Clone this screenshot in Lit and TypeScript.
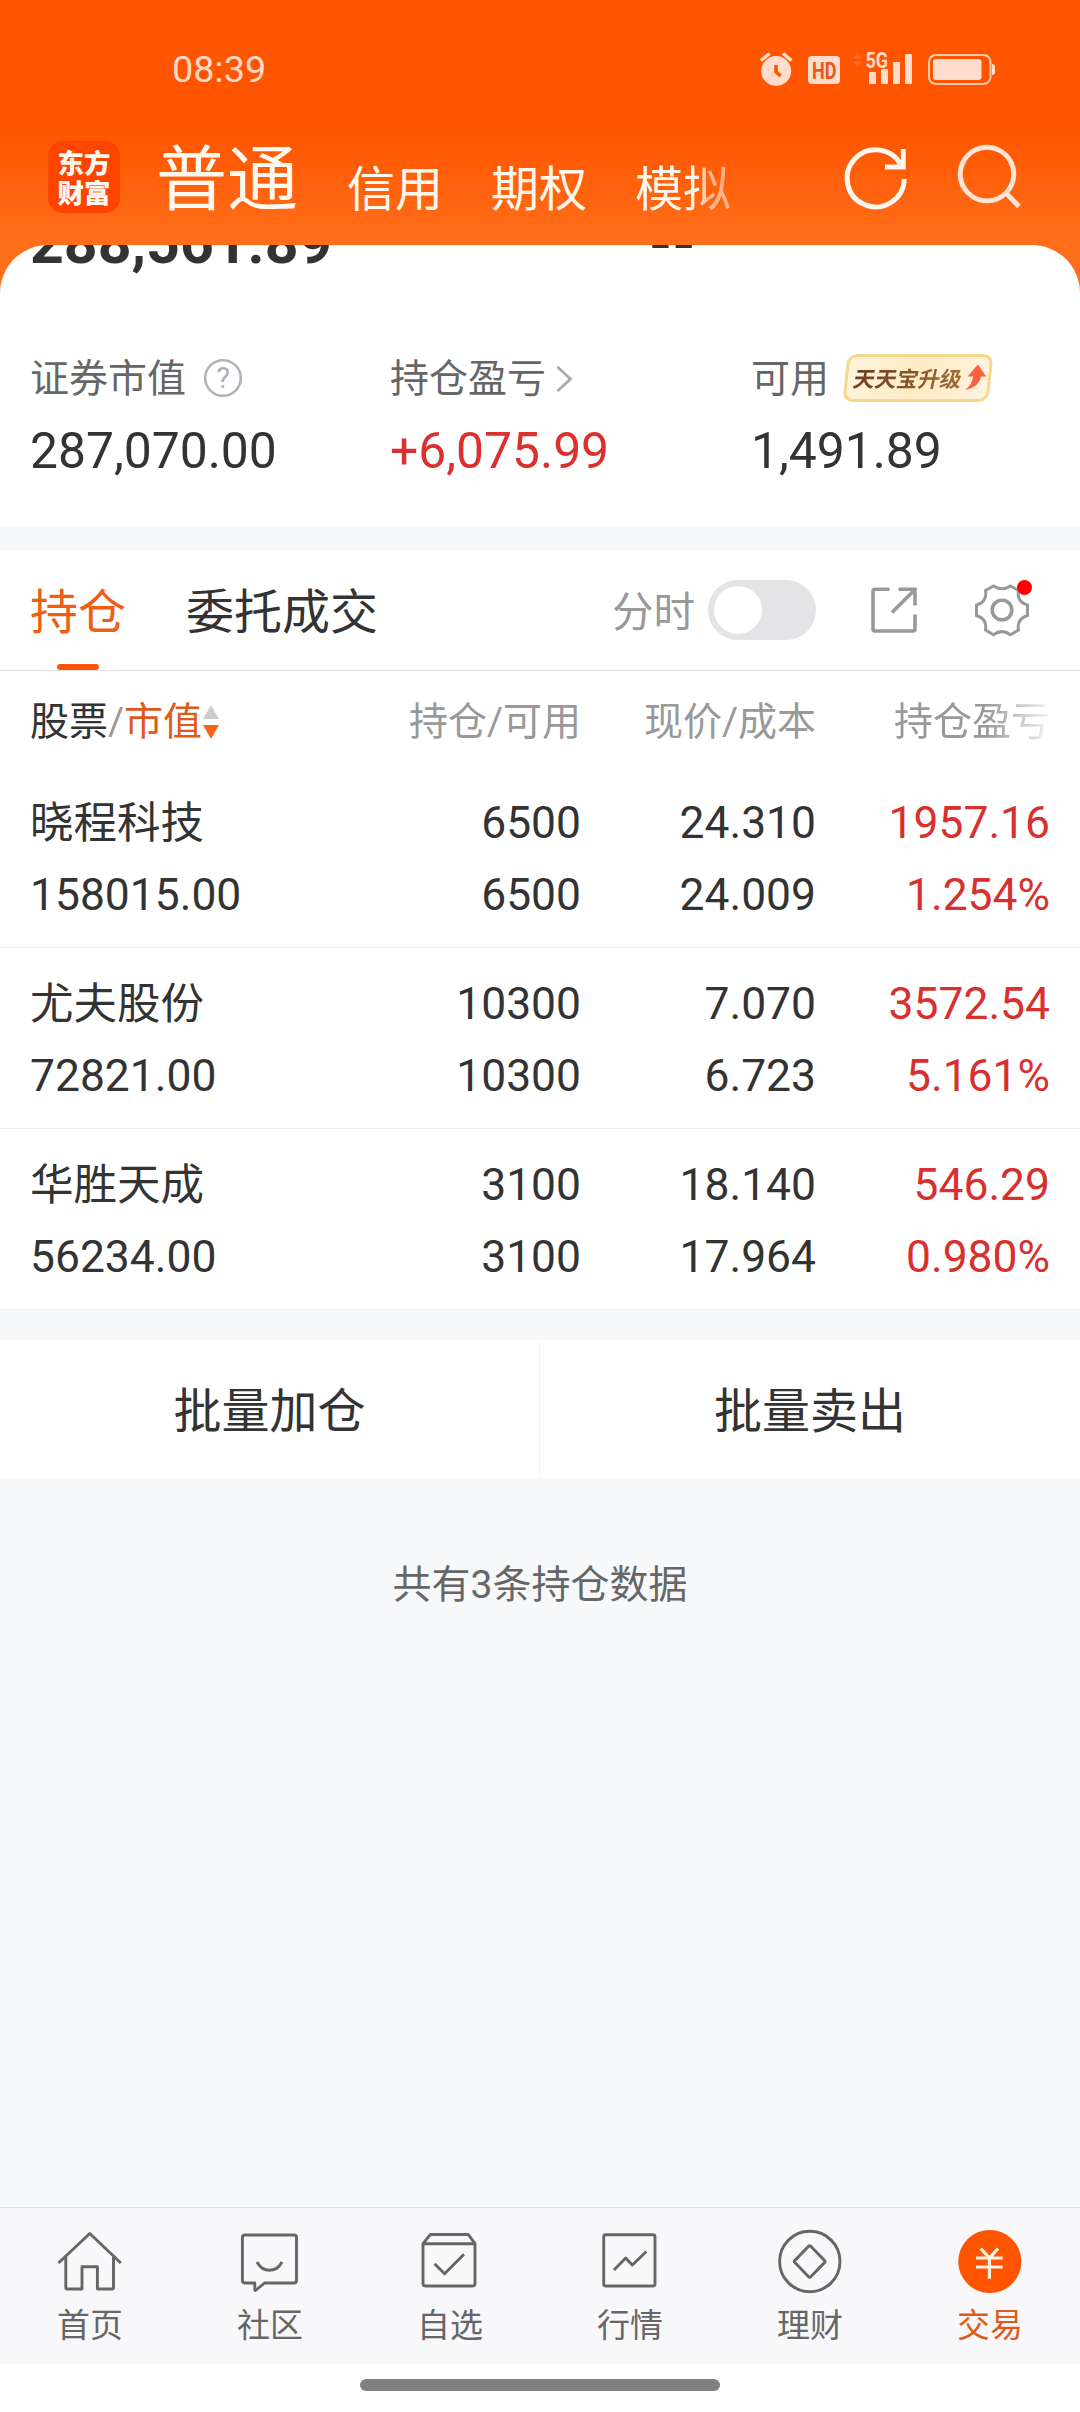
import { LitElement, html, css, svg } from "lit";
import { customElement, property } from "lit/decorators.js";
import { classMap } from "lit/directives/class-map.js";

interface Holding {
  name: string;
  value: string;
  held: string;
  usable: string;
  price: string;
  cost: string;
  profit: string;
  rate: string;
}

const HOLDINGS: Holding[] = [
  { name: "晓程科技", value: "158015.00", held: "6500", usable: "6500", price: "24.310", cost: "24.009", profit: "1957.16", rate: "1.254%" },
  { name: "尤夫股份", value: "72821.00", held: "10300", usable: "10300", price: "7.070", cost: "6.723", profit: "3572.54", rate: "5.161%" },
  { name: "华胜天成", value: "56234.00", held: "3100", usable: "3100", price: "18.140", cost: "17.964", profit: "546.29", rate: "0.980%" },
];

const NAV_ICONS: Record<string, unknown> = {
  home: svg`<path d="M0.500 34 L31.800 4.500 L62.800 34 M7.800 28 V58.500 Q7.800 60 9.300 60 H24 V37.700 H39.400 V60 H54 Q55.500 60 55.500 58.500 V28"/>`,
  community: svg`<path d="M7 6 H56 Q58.500 6 58.500 8.500 V51.500 Q58.500 54 56 54 H26.500 L17.500 61.500 L16.800 61 V54 H7 Q4.400 54 4.400 51.500 V8.500 Q4.400 6 7 6 Z M19 33 Q23.500 41.300 31.500 41.300 Q39.500 41.300 44 33"/>`,
  favorites: svg`<path d="M5 14.700 L12.400 5.500 H50.300 L57 14.700 V54.500 Q57 57 54.500 57 H7.500 Q5 57 5 54.500 Z H57 M16.600 34.700 L26.600 44.700 L46 25.300"/>`,
  market: svg`<rect x="5.700" y="5.700" width="51.300" height="51.300" rx="2"/><path d="M16 41 L27.700 29 L34.300 36 L48.400 22.500"/>`,
  wealth: svg`<circle cx="31.800" cy="32.500" r="30.200"/><path d="M30.600 17.200 Q31.700 16 32.800 17.200 L46.500 31.400 Q47.600 32.500 46.500 33.600 L32.800 47.800 Q31.700 49 30.600 47.800 L16.900 33.600 Q15.800 32.500 16.900 31.400 Z"/>`,
  trade: svg`<circle class="disc" cx="31.800" cy="32.500" r="31.600"/><path class="yen" d="M22.800 19.500 L31.400 29 L40 19.500 M18 29 H44.600 M18 38 H44.600 M31.400 29 V49.700"/>`,
};

@customElement("nav-item")
export class NavItem extends LitElement {
  @property() icon = "";
  @property() label = "";
  @property({ type: Boolean }) active = false;

  static styles = css`
    :host { display: block; flex: 1; }
    .item {
      display: flex;
      flex-direction: column;
      align-items: center;
      padding-top: 21px;
      color: #666;
      font-size: 33px;
      line-height: 40px;
    }
    .active { color: #e0591a; }
    .icon { width: 64px; height: 64px; margin-bottom: 13px; overflow: visible; fill: none; stroke: #666; stroke-width: 2.9; stroke-linejoin: round; }
    .disc { fill: #ff5500; stroke: none; }
    .yen { stroke: #fff1e6; stroke-width: 3.2; stroke-linejoin: miter; }
  `;

  render() {
    return html`<div class=${classMap({ item: true, active: this.active })}>
      <svg class="icon" viewBox="0 0 64 64">${NAV_ICONS[this.icon]}</svg>
      <span>${this.label}</span>
    </div>`;
  }
}

@customElement("holding-row")
export class HoldingRow extends LitElement {
  @property({ attribute: false }) data!: Holding;

  static styles = css`
    :host { display: block; }
    .row {
      display: grid;
      grid-template-columns: 351px 200px 235px 234px;
      grid-template-rows: 72px 72px;
      box-sizing: border-box;
      height: 181px;
      padding: 20px 30px 0 30px;
      border-bottom: 1px solid #ececec;
      font-size: 44.4px;
      line-height: 72px;
      color: #333;
      text-align: right;
      white-space: nowrap;
    }
    .left { text-align: left; }
    .name { font-size: 43.5px; line-height: 73px; }
    .up { color: #d8302f; }
  `;

  render() {
    const d = this.data;
    return html`<div class="row">
      <span class="left name">${d.name}</span><span>${d.held}</span><span>${d.price}</span><span class="up">${d.profit}</span>
      <span class="left">${d.value}</span><span>${d.usable}</span><span>${d.cost}</span><span class="up">${d.rate}</span>
    </div>`;
  }
}

@customElement("app-root")
export class AppRoot extends LitElement {
  static styles = css`
    :host {
      display: block;
      font-family: Roboto, "Noto Sans CJK SC", sans-serif;
      color: #333;
    }
    .screen {
      display: flex;
      flex-direction: column;
      width: 1080px;
      height: 2412px;
      overflow: hidden;
      background: linear-gradient(#ff5500 0, #ff5500 128px, #ff6e1a 240px, #ff6e1a 300px, #f7f8fa 300px);
    }
    svg { display: block; flex: none; }

    .status {
      display: flex;
      justify-content: space-between;
      height: 110px;
      padding: 0 84px 0 172px;
      box-sizing: border-box;
    }
    .clock { padding-top: 46px; font-size: 37.8px; line-height: 46px; color: #ffd9c4; }
    .tray { width: 240px; height: 40px; margin-top: 50px; fill: #ffdccb; }
    .tray-text { font-family: Roboto, sans-serif; font-weight: 700; }

    .top {
      display: flex;
      align-items: flex-start;
      height: 135px;
      padding-left: 48px;
      box-sizing: border-box;
      color: #fff8ef;
      white-space: nowrap;
    }
    .logo {
      display: flex;
      flex-direction: column;
      align-items: center;
      justify-content: center;
      width: 72px;
      height: 72px;
      margin-top: 31px;
      border-radius: 15px;
      background: #ff4400;
      font-family: "Noto Sans CJK SC", sans-serif;
      font-weight: 900;
      font-size: 26.5px;
      line-height: 30px;
    }
    .main-tab { width: 142px; margin: 25px 49px 0 36px; font-size: 71px; line-height: 90px; }
    .tabs { display: flex; gap: 48px; width: 444px; margin-top: 50px; font-size: 48px; line-height: 60px; }
    .fading {
      -webkit-mask-image: linear-gradient(90deg, #000 62px, rgba(0, 0, 0, 0.6) 72px, rgba(0, 0, 0, 0.5) 96px);
      mask-image: linear-gradient(90deg, #000 62px, rgba(0, 0, 0, 0.6) 72px, rgba(0, 0, 0, 0.5) 96px);
    }
    .top-icons { width: 200px; height: 80px; margin-left: 41px; margin-top: 27px; fill: none; stroke-width: 4.9; }

    .summary {
      height: 281px;
      border-radius: 48px 48px 0 0;
      overflow: hidden;
      background: #fff;
      flex: none;
    }
    .totals {
      display: grid;
      grid-template-columns: 619px 1fr;
      align-items: start;
      height: 38px;
      padding-left: 30px;
      overflow: hidden;
      font-size: 59px;
      font-weight: 700;
      line-height: 76px;
    }
    .total { margin-top: -40px; }
    .metrics { display: grid; grid-template-columns: 360px 361px 1fr; padding: 71px 0 0 30px; }
    .label { display: flex; align-items: center; height: 50px; font-size: 39px; line-height: 50px; color: #666; }
    .amount { margin-top: 17px; font-size: 49.8px; line-height: 60px; }
    .red { color: #dc302e; }
    .help { width: 40px; height: 40px; margin-left: 17px; margin-top: -2px; }
    .help-mark { font: 400 29px Roboto, sans-serif; fill: #b0b0b0; }
    .chevron { width: 20px; height: 30px; margin-left: 8px; }
    .promo {
      display: flex;
      align-items: center;
      box-sizing: border-box;
      width: 146px;
      height: 48px;
      margin-left: 16px;
      margin-top: -2px;
      padding-left: 6px;
      border: 3px solid #f5d88c;
      border-radius: 10px;
      background: linear-gradient(100deg, #fff3dc, #ffecc4 50%, #fff3df);
      transform: skewX(-6deg);
    }
    .promo-text {
      font-family: "Noto Sans CJK SC", sans-serif;
      font-size: 21.6px;
      font-weight: 700;
      line-height: 30px;
      transform: skewX(-6deg);
      color: transparent;
      background: linear-gradient(90deg, #6a4022, #a06a35);
      -webkit-background-clip: text;
      background-clip: text;
      white-space: nowrap;
    }
    .promo-arrow { width: 22px; height: 28px; margin-left: 3px; margin-top: -2px; }

    .strip { height: 24px; flex: none; background: #f7f8fa; }
    .toolbar {
      display: flex;
      align-items: flex-start;
      height: 121px;
      flex: none;
      box-sizing: border-box;
      padding-left: 30px;
      border-bottom: 1px solid #dedede;
      background: #fff;
      font-size: 48px;
      line-height: 60px;
    }
    .tab { display: flex; flex-direction: column; align-items: center; margin-top: 33px; }
    .current { color: #ee5f14; }
    .second { margin-left: 60px; }
    .mark { width: 42px; height: 6px; margin-top: 21px; border-radius: 3px; background: #fa5508; }
    .minute { margin: 33px 0 0 234px; font-size: 41.5px; color: #999; }
    .toggle {
      width: 108px;
      height: 60px;
      box-sizing: border-box;
      margin: 30px 0 0 13px;
      padding: 6px;
      border-radius: 30px;
      background: #e4e4e6;
    }
    .knob { width: 48px; height: 48px; border-radius: 50%; background: #fff; }
    .tool-icons { width: 170px; height: 70px; margin: 25px 0 0 49px; fill: none; stroke: #999; stroke-width: 3.6; }

    .list { background: #fff; flex: none; }
    .head {
      display: grid;
      grid-template-columns: 351px 200px 235px 234px;
      height: 96px;
      padding: 26px 30px 0 30px;
      box-sizing: border-box;
      font-size: 39px;
      line-height: 50px;
      color: #999;
      text-align: right;
      white-space: nowrap;
    }
    .sort { display: flex; align-items: center; height: 50px; text-align: left; }
    .dark { color: #333; }
    .orange { color: #e0591a; }
    .arrows { width: 16px; height: 36px; margin-left: 1px; }
    .fade {
      -webkit-mask-image: linear-gradient(90deg, #000 170px, transparent 242px);
      mask-image: linear-gradient(90deg, #000 170px, transparent 242px);
    }

    .gap { height: 30px; flex: none; background: #f7f8fa; }
    .actions { display: grid; grid-template-columns: 539px 540px; gap: 1px; height: 138px; flex: none; background: #f5f5f6; }
    .action { height: 138px; background: #fff; font-size: 48px; line-height: 143px; text-align: center; }
    .rest { flex: 1; padding-top: 82px; background: #f7f8fa; font-size: 39px; line-height: 50px; text-align: center; color: #666; }
    .nav { display: flex; height: 157px; flex: none; box-sizing: border-box; border-top: 1px solid #e0e0e0; background: #f8f8fa; }
    .gesture { display: flex; justify-content: center; height: 48px; flex: none; padding-top: 15px; box-sizing: border-box; background: #fff; }
    .pill { width: 360px; height: 12px; border-radius: 6px; background: #808080; }
  `;

  render() {
    return html`<div class="screen">
      <div class="status">
        <span class="clock">08:39</span>
        <svg class="tray" viewBox="756 50 240 40">
          <circle cx="776.2" cy="71" r="15"/>
          <path d="M761 60.500 L769.500 53.500 M791.500 60.500 L783 53.500" stroke="#ffdccb" stroke-width="3.500"/>
          <path d="M776 65 V72 L780.500 76" fill="none" stroke="#ff5500" stroke-width="3.600"/>
          <rect x="808" y="56" width="32" height="28" rx="4"/>
          <text class="tray-text" x="812" y="78.500" font-size="23" textLength="24.500" lengthAdjust="spacingAndGlyphs" fill="#e8581c">HD</text>
          <path d="M853 58.500 L857.500 53 L862 58.500 Z M853 61.500 L857.500 67 L862 61.500 Z" fill="#ff6a24"/>
          <text class="tray-text" x="865.500" y="67.500" font-size="21.500" textLength="22.500" lengthAdjust="spacingAndGlyphs">5G</text>
          <rect x="869" y="72" width="7" height="12" rx="1"/><rect x="881" y="69" width="7" height="15" rx="1"/>
          <rect x="893" y="62" width="7" height="22" rx="1"/><rect x="905" y="54" width="7" height="30" rx="1"/>
          <rect x="929" y="55" width="61.500" height="29" rx="7" fill="none" stroke="#ffc9a8" stroke-width="2"/>
          <rect x="933" y="59" width="48.500" height="21" rx="3"/>
          <path d="M992 64 Q995 64 995 67 V72 Q995 75 992 75 Z"/>
        </svg>
      </div>
      <div class="top">
        <div class="logo"><span>东方</span><span>财富</span></div>
        <span class="main-tab">普通</span>
        <div class="tabs"><span>信用</span><span>期权</span><span class="fading">模拟</span></div>
        <svg class="top-icons" viewBox="832 137 200 80">
          <path d="M901.500 166 A28.600 28.600 0 1 0 904.300 179" stroke="#fff6ee"/>
          <path d="M885 167 H903.300 V149" stroke="#fff6ee"/>
          <path d="M987 147.300 A26.800 26.800 0 1 0 987.010 147.300 Z M1005.500 192.500 L1019 206.500" stroke="#ffe4d3"/>
        </svg>
      </div>

      <div class="summary">
        <div class="totals"><span class="total">288,561.89</span><span class="total">--</span></div>
        <div class="metrics">
          <div>
            <div class="label">证券市值
              <svg class="help" viewBox="0 0 40 40"><circle cx="20" cy="20" r="17.800" fill="none" stroke="#b3b3b3" stroke-width="2.600"/><text class="help-mark" x="20" y="30" text-anchor="middle">?</text></svg>
            </div>
            <div class="amount">287,070.00</div>
          </div>
          <div>
            <div class="label">持仓盈亏
              <svg class="chevron" viewBox="0 0 20 30"><path d="M3.500 3 L16.500 15 L3.500 27" fill="none" stroke="#aaa" stroke-width="2.800"/></svg>
            </div>
            <div class="amount red">+6,075.99</div>
          </div>
          <div>
            <div class="label">可用
              <div class="promo">
                <span class="promo-text">天天宝升级</span>
                <svg class="promo-arrow" viewBox="0 0 22 28"><path d="M11.500 1.500 L21 13.500 H16 Q15 24 1.500 27 Q8 21 8 13.500 H2.500 Z" fill="#fb5f3c"/></svg>
              </div>
            </div>
            <div class="amount">1,491.89</div>
          </div>
        </div>
      </div>

      <div class="strip"></div>
      <div class="toolbar">
        <div class="tab current">持仓<div class="mark"></div></div>
        <div class="tab second">委托成交</div>
        <span class="minute">分时</span>
        <div class="toggle"><div class="knob"></div></div>
        <svg class="tool-icons" viewBox="865 575 170 70">
          <path d="M889.500 589.300 H875 Q873 589.300 873 591.300 V629 Q873 631 875 631 H913 Q915 631 915 629 V614.500 M898.500 589.300 H915 V605.500 M892 612.500 L914.500 590"/>
          <circle cx="1002" cy="610" r="9.800"/>
          <path stroke-width="3" d="M993.500 586 Q1002 591.500 1010.500 586 L1018.500 590.500 Q1016.500 602 1027.500 605 V615.500 Q1016.500 619 1018.500 630 L1010.500 634.800 Q1002 628.500 993.500 634.800 L985.500 630 Q987.500 619 976.500 615.500 V605 Q987.500 602 985.500 590.500 Z"/>
          <circle cx="1024.500" cy="587.500" r="7.500" fill="#ff0000" stroke="none"/>
        </svg>
      </div>

      <div class="list">
        <div class="head">
          <span class="sort"><span class="dark">股票</span><span>/</span><span class="orange">市值</span>
            <svg class="arrows" viewBox="0 0 16 36"><path d="M0 15 L8 1 L16 15 Z" fill="#ccc"/><path d="M0 21 L8 35 L16 21 Z" fill="#f96414"/></svg>
          </span>
          <span>持仓/可用</span><span>现价/成本</span><span class="fade">持仓盈亏</span>
        </div>
        ${HOLDINGS.map((h) => html`<holding-row .data=${h}></holding-row>`)}
      </div>

      <div class="gap"></div>
      <div class="actions"><div class="action">批量加仓</div><div class="action">批量卖出</div></div>
      <div class="rest">共有3条持仓数据</div>

      <div class="nav">
        <nav-item icon="home" label="首页"></nav-item>
        <nav-item icon="community" label="社区"></nav-item>
        <nav-item icon="favorites" label="自选"></nav-item>
        <nav-item icon="market" label="行情"></nav-item>
        <nav-item icon="wealth" label="理财"></nav-item>
        <nav-item icon="trade" label="交易" active></nav-item>
      </div>
      <div class="gesture"><div class="pill"></div></div>
    </div>`;
  }
}
